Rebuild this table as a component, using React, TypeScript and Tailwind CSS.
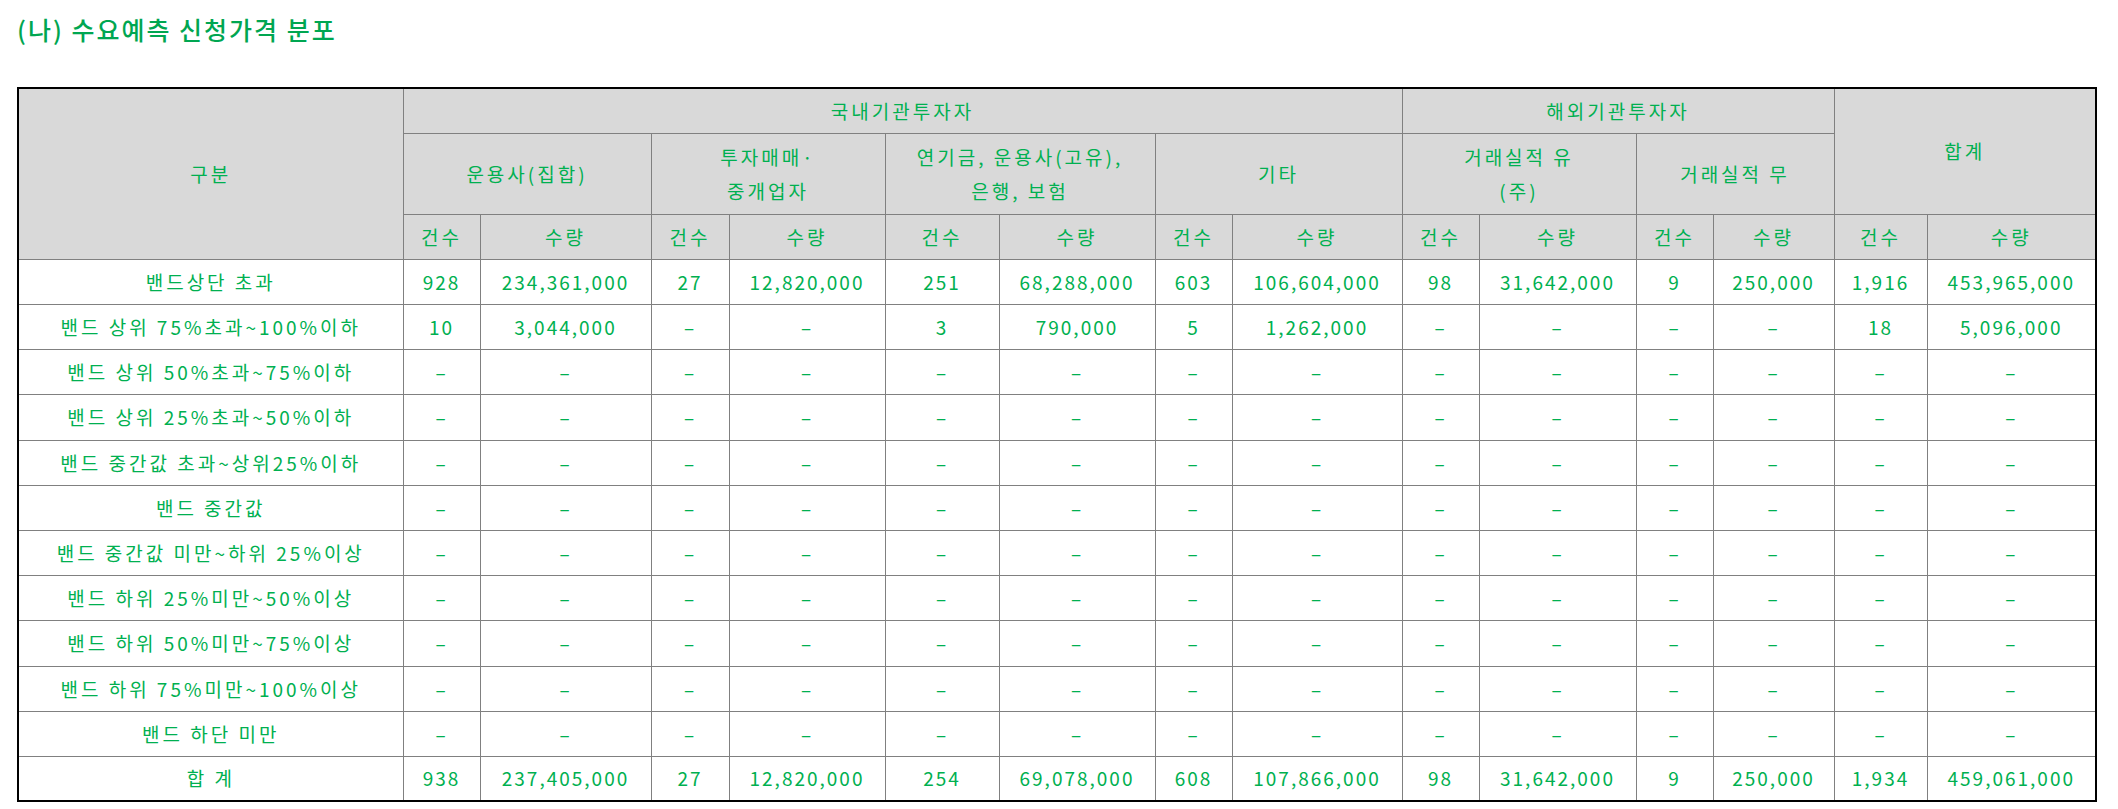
const colWidths = [
  'w-[385px]', 'w-[77px]', 'w-[171px]', 'w-[78px]', 'w-[156px]', 'w-[114px]', 'w-[156px]', 'w-[77px]',
  'w-[170px]', 'w-[77px]', 'w-[157px]', 'w-[77px]', 'w-[121px]', 'w-[93px]', 'w-[169px]',
];

const subHeaders = [
  { label: ['운용사(집합)'] },
  { label: ['투자매매·', '중개업자'] },
  { label: ['연기금, 운용사(고유),', '은행, 보험'] },
  { label: ['기타'] },
  { label: ['거래실적 유', '(주)'] },
  { label: ['거래실적 무'] },
];

const dash = Array(14).fill('–');

const rows: { label: string; values: string[]; h: string }[] = [
  {
    label: '밴드상단 초과',
    values: ['928', '234,361,000', '27', '12,820,000', '251', '68,288,000', '603', '106,604,000', '98', '31,642,000', '9', '250,000', '1,916', '453,965,000'],
    h: 'h-[45px]',
  },
  {
    label: '밴드 상위 75%초과~100%이하',
    values: ['10', '3,044,000', '–', '–', '3', '790,000', '5', '1,262,000', '–', '–', '–', '–', '18', '5,096,000'],
    h: 'h-[45px]',
  },
  { label: '밴드 상위 50%초과~75%이하', values: dash, h: 'h-[45px]' },
  { label: '밴드 상위 25%초과~50%이하', values: dash, h: 'h-[46px]' },
  { label: '밴드 중간값 초과~상위25%이하', values: dash, h: 'h-[45px]' },
  { label: '밴드 중간값', values: dash, h: 'h-[45px]' },
  { label: '밴드 중간값 미만~하위 25%이상', values: dash, h: 'h-[45px]' },
  { label: '밴드 하위 25%미만~50%이상', values: dash, h: 'h-[45px]' },
  { label: '밴드 하위 50%미만~75%이상', values: dash, h: 'h-[46px]' },
  { label: '밴드 하위 75%미만~100%이상', values: dash, h: 'h-[45px]' },
  { label: '밴드 하단 미만', values: dash, h: 'h-[45px]' },
  {
    label: '합 계',
    values: ['938', '237,405,000', '27', '12,820,000', '254', '69,078,000', '608', '107,866,000', '98', '31,642,000', '9', '250,000', '1,934', '459,061,000'],
    h: 'h-[45px]',
  },
];

const cell = 'border border-[#808080] text-center align-middle p-0';
const head = `${cell} bg-[#d9d9d9] font-normal tracking-[3px]`;

export default function App() {
  return (
    <div
      className="min-h-screen bg-white pl-[17px] pt-[13px] text-[#00b050]"
      style={{ fontFamily: "'Noto Sans CJK KR', 'Noto Sans', sans-serif" }}
    >
      <h2 className="h-[32px] text-[25px] leading-[32px] font-medium tracking-[2px] text-[#00a651]">
        (나) 수요예측 신청가격 분포
      </h2>

      <table className="mt-[42px] w-[2078px] table-fixed border-collapse border-2 border-black text-[19px] leading-[34px]">
        <colgroup>
          {colWidths.map((w, i) => (
            <col key={i} className={w} />
          ))}
        </colgroup>
        <thead>
          <tr className="h-[45px]">
            <th rowSpan={3} className={head}>구분</th>
            <th colSpan={8} className={head}>국내기관투자자</th>
            <th colSpan={4} className={head}>해외기관투자자</th>
            <th colSpan={2} rowSpan={2} className={head}>합계</th>
          </tr>
          <tr className="h-[81px]">
            {subHeaders.map((s, i) => (
              <th key={i} colSpan={2} className={head}>
                {s.label.map((l, j) => (
                  <div key={j}>{l}</div>
                ))}
              </th>
            ))}
          </tr>
          <tr className="h-[45px]">
            {Array.from({ length: 7 }).flatMap((_, i) => [
              <th key={`a${i}`} className={head}>건수</th>,
              <th key={`b${i}`} className={head}>수량</th>,
            ])}
          </tr>
        </thead>
        <tbody>
          {rows.map((r) => (
            <tr key={r.label} className={r.h}>
              <td className={`${cell} tracking-[3px]`}>{r.label}</td>
              {r.values.map((v, i) => (
                <td key={i} className={`${cell} tracking-[2px]`}>{v}</td>
              ))}
            </tr>
          ))}
        </tbody>
      </table>
    </div>
  );
}
